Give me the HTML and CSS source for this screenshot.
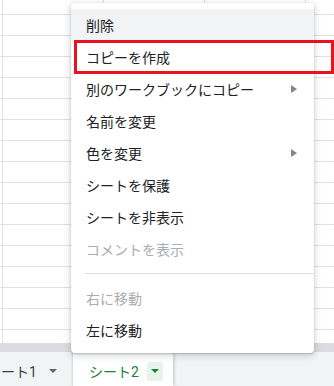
FILE: index.html
```html
<!DOCTYPE html>
<html>
  <head>
    <title>シートメニュー</title>
    <meta charset="UTF-8" />
    <link rel="stylesheet" href="styles.css">
  </head>
  <body>
    <div class="sheet">
      <div class="grid"></div>
      <div class="scrollbar"></div>
      <div class="tabs">
        <div class="tab">シート1<span class="caret"></span></div>
        <div class="tab active">シート2<span class="caret-box"><span class="caret"></span></span></div>
      </div>

      <div class="menu">
        <div class="item hover">削除</div>
        <div class="item">コピーを作成</div>
        <div class="item sub">別のワークブックにコピー<span class="arrow"></span></div>
        <div class="item">名前を変更</div>
        <div class="item sub">色を変更<span class="arrow"></span></div>
        <div class="item">シートを保護</div>
        <div class="item">シートを非表示</div>
        <div class="item disabled">コメントを表示</div>
        <div class="sep"></div>
        <div class="item disabled">右に移動</div>
        <div class="item">左に移動</div>
      </div>

      <div class="highlight"></div>
    </div>
  </body>
</html>
```

FILE: styles.css
```css
body {
  margin: 0;
  font-family: Roboto, "Noto Sans CJK JP", sans-serif;
  color: #202124;
}

.sheet {
  position: relative;
  width: 334px;
  height: 386px;
  overflow: hidden;
  background: #fff;
}

.grid {
  height: 343px;
  background:
    repeating-linear-gradient(to right, #e1e1e1 0 1px, transparent 1px 101px) 2px 0,
    repeating-linear-gradient(to bottom, transparent 0 20px, #e1e1e1 20px 21px) 0 -6px;
}

.scrollbar {
  height: 9px;
  background: #dadce0;
}

.tabs {
  display: flex;
  height: 34px;
  background: #f1f3f4;
  font-size: 14px;
  color: #3c4043;
}

.tab {
  display: flex;
  align-items: center;
  padding-top: 4px;
  white-space: nowrap;
}

.tab:first-child {
  flex: 0 0 72px;
  justify-content: flex-end;
  padding-right: 15px;
  box-sizing: border-box;
  overflow: hidden;
}

.tab .caret {
  width: 0;
  height: 0;
  margin-left: 12px;
  border-left: 4px solid transparent;
  border-right: 4px solid transparent;
  border-top: 4px solid #5f6368;
}

.tab.active {
  width: 101px;
  box-sizing: border-box;
  padding-left: 16px;
  background: #fff;
  color: #188038;
  border-left: 1px solid #dadce0;
  box-shadow: 1px 0 3px rgba(60, 64, 67, 0.25);
}

.caret-box {
  display: flex;
  align-items: center;
  justify-content: center;
  width: 16px;
  height: 19px;
  margin-left: 8px;
  border-radius: 2px;
  background: #e6f4ea;
}

.caret-box .caret {
  margin-left: 0;
  border-top-color: #188038;
}

.menu {
  position: absolute;
  left: 71px;
  top: 3px;
  width: 243px;
  padding: 6px 0 7px;
  background: #fff;
  border-radius: 4px;
  box-shadow: 0 2px 6px 2px rgba(60, 64, 67, 0.15), 0 1px 2px rgba(60, 64, 67, 0.3);
  font-family: "Noto Sans CJK JP", sans-serif;
  font-size: 14px;
}

.item {
  display: flex;
  align-items: center;
  justify-content: space-between;
  height: 32px;
  padding: 0 17px 0 15px;
}

.item.hover {
  background: #f1f3f4;
}

.item.disabled {
  color: #a9acb0;
}

.arrow {
  width: 0;
  height: 0;
  border-top: 4px solid transparent;
  border-bottom: 4px solid transparent;
  border-left: 6px solid #80868b;
}

.sep {
  height: 1px;
  margin: 8px 0 8px 14px;
  background: #dadce0;
}

.highlight {
  position: absolute;
  left: 74px;
  top: 40px;
  width: 260px;
  height: 34px;
  box-sizing: border-box;
  border: 3px solid #e8141c;
}
```
